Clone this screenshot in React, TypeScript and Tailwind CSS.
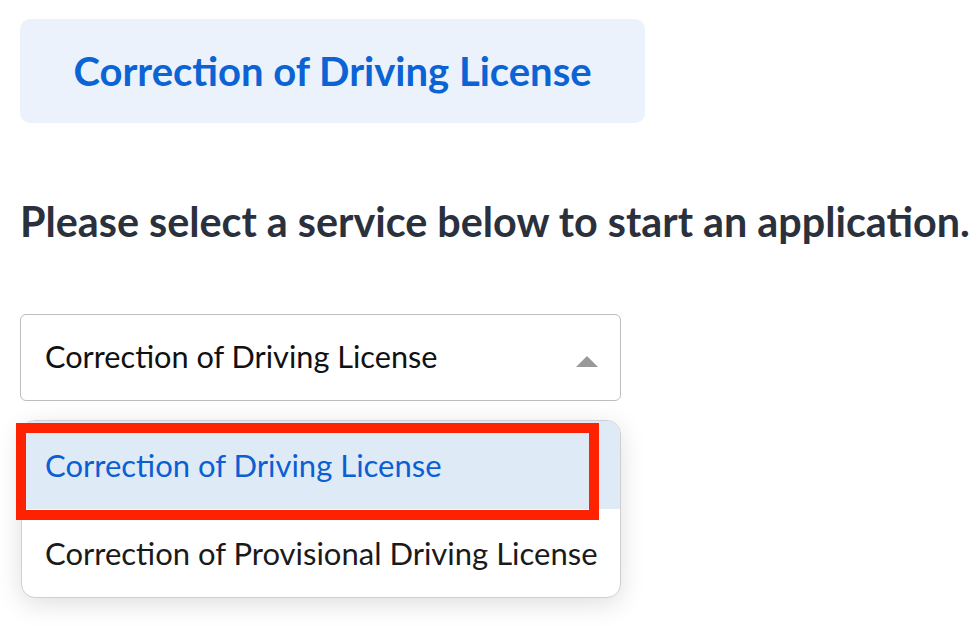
import React from "react";

export default function App() {
  return (
    <div
      className="w-[980px] h-[626px] bg-white overflow-hidden pl-5 pt-[19px]"
      style={{ fontFamily: '"Lato", "Open Sans", sans-serif' }}
    >
      <div className="w-[625px] h-[104px] rounded-[10px] bg-[#ebf2fc] flex items-center justify-center">
        <span className="text-[40px] leading-none font-bold text-[#0b63d4]">Correction of Driving License</span>
      </div>
      <h1 className="mt-[77px] h-[44px] flex items-center text-[41.3px] leading-none font-bold text-[#2b313c] whitespace-nowrap">
        Please select a service below to start an application.
      </h1>
      <div className="mt-[70px] w-[601px] h-[87px] rounded-[6px] border-[1.5px] border-[#bdbdbd] flex items-center justify-between pl-[24px] pr-[22px]">
        <span className="text-[30.7px] leading-none text-[#111]">Correction of Driving License</span>
        <svg className="mt-2" width="22" height="11" viewBox="0 0 22 11">
          <polygon points="0,11 11,0 22,11" fill="#999999" />
        </svg>
      </div>
      <div className="relative mt-[19px] ml-px w-[600px]">
        <div className="h-[178px] rounded-[14px] border border-[#cfcfcf] bg-white overflow-hidden shadow-[0_6px_26px_rgba(0,0,0,0.13)] flex flex-col">
          <div className="h-[88px] bg-[#deebf7] flex items-center pl-[23px]">
            <span className="text-[31px] leading-none text-[#0b5fd3]">Correction of Driving License</span>
          </div>
          <div className="h-[88px] flex items-center pl-[23px]">
            <span className="text-[31px] leading-none text-[#1a1a1a]">Correction of Provisional Driving License</span>
          </div>
        </div>
        <div className="absolute left-[-5px] top-[3px] w-[583px] h-[97px] border-[10px] border-[#ff2200]" />
      </div>
    </div>
  );
}
